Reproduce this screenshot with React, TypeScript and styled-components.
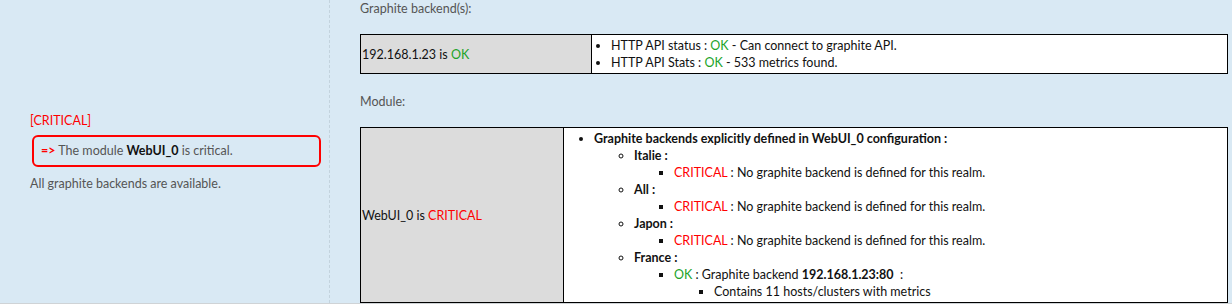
import styled, { createGlobalStyle } from "styled-components";

// Page-wide reset and font
const GlobalStyle = createGlobalStyle`
  html, body {
    margin: 0;
    padding: 0;
    background: #d9e9f4;
  }
  body {
    font-family: Lato, "Open Sans", sans-serif;
    font-size: 12.5px;
    line-height: 17px;
    color: #555;
  }
`;

interface Realm {
  name: string;
  ok: boolean;
  backend?: string;
  hosts?: number;
}

const realms: Realm[] = [
  { name: "Italie", ok: false },
  { name: "All", ok: false },
  { name: "Japon", ok: false },
  { name: "France", ok: true, backend: "192.168.1.23:80", hosts: 11 },
];

function App() {
  return (
    <>
      <GlobalStyle />
      <Page>
        <Summary>
          <StateLabel>[CRITICAL]</StateLabel>
          <AlertBox>
            <Arrow>=&gt;</Arrow> The module <Strong>WebUI_0</Strong> is critical.
          </AlertBox>
          <Note>All graphite backends are available.</Note>
        </Summary>

        <Details>
          <SectionTitle>Graphite backend(s):</SectionTitle>
          <StatusTable>
            <tbody>
              <tr>
                <NameCell width={228}>
                  192.168.1.23 is <Ok>OK</Ok>
                </NameCell>
                <InfoCell>
                  <List level={0} indent={18}>
                    <li>HTTP API status : <Ok>OK</Ok> - Can connect to graphite API.</li>
                    <li>HTTP API Stats : <Ok>OK</Ok> - 533 metrics found.</li>
                  </List>
                </InfoCell>
              </tr>
            </tbody>
          </StatusTable>

          <SectionTitle>Module:</SectionTitle>
          <StatusTable>
            <tbody>
              <tr>
                <NameCell width={200}>
                  WebUI_0 is <Critical>CRITICAL</Critical>
                </NameCell>
                <InfoCell>
                  <List level={0} indent={29}>
                    <li>
                      <Strong>Graphite backends explicitly defined in WebUI_0 configuration :</Strong>
                      <List level={1}>
                        {realms.map((realm) => (
                          <li key={realm.name}>
                            <Strong>{realm.name} :</Strong>
                            <List level={2}>
                              {realm.ok ? (
                                <li>
                                  <Ok>OK</Ok> : Graphite backend <Strong>{realm.backend}</Strong>&nbsp; :
                                  <List level={3}>
                                    <li>Contains {realm.hosts} hosts/clusters with metrics</li>
                                  </List>
                                </li>
                              ) : (
                                <li>
                                  <Critical>CRITICAL</Critical> : No graphite backend is defined for this realm.
                                </li>
                              )}
                            </List>
                          </li>
                        ))}
                      </List>
                    </li>
                  </List>
                </InfoCell>
              </tr>
            </tbody>
          </StatusTable>
        </Details>
      </Page>
    </>
  );
}

// Full page: summary column on the left, details on the right
const Page = styled.div`
  display: flex;
  height: 303px;
  overflow: hidden;
  border-bottom: 1px solid #cfd3d6;
`;

const Summary = styled.div`
  flex: 0 0 299px;
  padding-left: 30px;
  border-right: 1px dashed #c3d3de;
  display: flex;
  flex-direction: column;
  justify-content: center;
`;

const StateLabel = styled.div`
  color: #f00;
`;

const AlertBox = styled.div`
  margin: 6px 0 0 2px;
  width: 271px;
  padding: 5px 7px 6px;
  border: 2px solid #f00;
  border-radius: 6px;
`;

const Arrow = styled.span`
  color: #f00;
  font-weight: 700;
`;

const Note = styled.div`
  margin-top: 8px;
`;

const Strong = styled.span`
  font-weight: 700;
  color: #111;
`;

const Details = styled.div`
  flex: 1;
  padding: 0 4px 0 30px;
`;

const SectionTitle = styled.div`
  margin-bottom: 17px;
`;

const StatusTable = styled.table`
  width: 100%;
  border-collapse: collapse;
  margin-bottom: 19px;
  color: #111;
`;

const NameCell = styled.td<{ width: number }>`
  width: ${(p) => p.width}px;
  background: #dcdcdc;
  border: 1px solid #000;
  padding: 2px 1px;
  vertical-align: middle;
`;

const InfoCell = styled.td`
  background: #fff;
  border: 1px solid #000;
  padding: 2px 1px;
  vertical-align: top;
`;

const bullets = ["disc", "circle", "square", "square"];

// Nested status list; the top level indent differs between the two tables
const List = styled.ul<{ level: number; indent?: number }>`
  margin: 0;
  padding-left: ${(p) => p.indent ?? 40}px;
  list-style-type: ${(p) => bullets[p.level]};
`;

const Ok = styled.span`
  color: #22a32a;
`;

const Critical = styled.span`
  color: #f00;
`;

export default App;
